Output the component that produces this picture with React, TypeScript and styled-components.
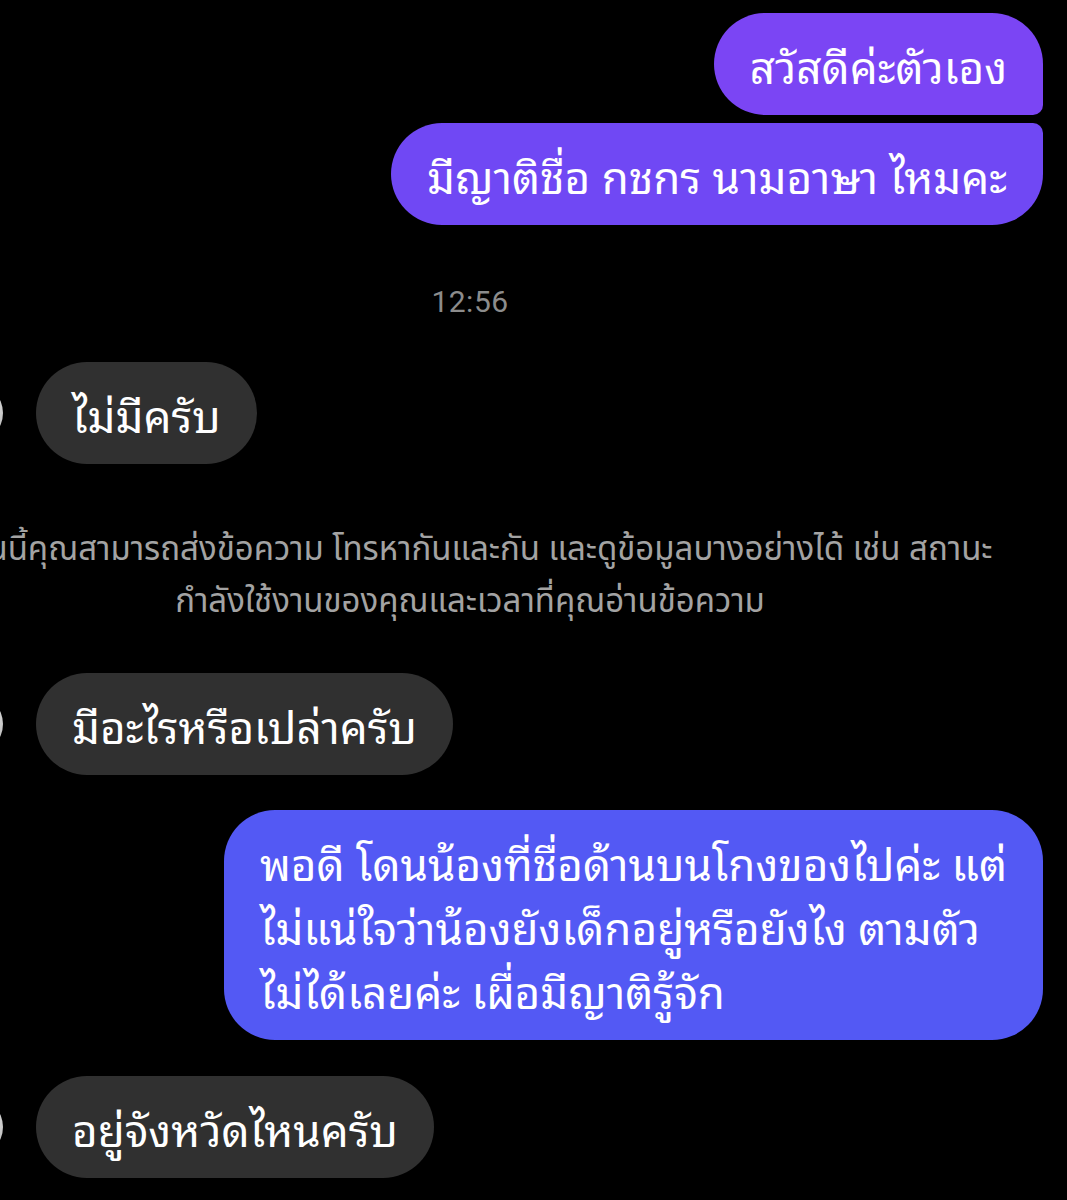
import React from "react";
import styled, { createGlobalStyle } from "styled-components";

const Global = createGlobalStyle`
  html, body { margin: 0; padding: 0; background: #000; }
  body { font-family: "Noto Sans Thai Looped", "Noto Sans Thai", "Noto Sans", "DejaVu Sans", sans-serif; }
`;

const Page = styled.div`
  width: 1067px;
  height: 1200px;
  background: #000;
  overflow: hidden;
  display: flex;
  flex-direction: column;
`;

const Row = styled.div<{ $side: "in" | "out"; $top: number }>`
  display: flex;
  align-items: center;
  justify-content: ${(p) => (p.$side === "out" ? "flex-end" : "flex-start")};
  margin-top: ${(p) => p.$top}px;
  padding: ${(p) => (p.$side === "out" ? "0 24px 0 0" : "0")};
  gap: 33px;
`;

const Avatar = styled.div`
  width: 60px;
  height: 60px;
  border-radius: 50%;
  margin-left: -57px;
  flex: none;
  background: radial-gradient(circle at 70% 40%, #e8e8e8, #8a8a8a);
`;

const Bubble = styled.div<{ $bg: string; $radius: string }>`
  background: ${(p) => p.$bg};
  border-radius: ${(p) => p.$radius};
  color: #fff;
  font-size: 44px;
  line-height: 64px;
  padding: 19px 36px;
  white-space: pre;
  flex: none;
  box-sizing: border-box;
`;

const Timestamp = styled.div`
  width: 940px;
  margin-top: 60px;
  text-align: center;
  font-family: Roboto, "Liberation Sans", sans-serif;
  font-size: 30px;
  line-height: 34px;
  color: #8c8c8c;
  letter-spacing: 0.5px;
`;

const SystemNote = styled.div`
  width: 940px;
  margin-top: 60px;
  display: flex;
  flex-direction: column;
  align-items: center;
  color: #a3a3a3;
  font-family: "Noto Sans Thai", "Noto Sans", sans-serif;
  font-size: 33px;
  line-height: 52px;
`;

const NoteLine = styled.span`
  white-space: nowrap;
`;

const R = 51;
const PURPLE1 = "#7b45f4";
const PURPLE2 = "#7048f4";
const BLUE = "#5359f4";
const GREY = "#303030";

export default function App() {
  return (
    <>
      <Global />
      <Page>
        <Row $side="out" $top={13}>
          <Bubble $bg={PURPLE1} $radius={`${R}px ${R}px 10px ${R}px`}>สวัสดีค่ะตัวเอง</Bubble>
        </Row>
        <Row $side="out" $top={8}>
          <Bubble $bg={PURPLE2} $radius={`${R}px 10px ${R}px ${R}px`}>มีญาติชื่อ กชกร นามอาษา ไหมคะ</Bubble>
        </Row>
        <Timestamp>12:56</Timestamp>
        <Row $side="in" $top={43}>
          <Avatar />
          <Bubble $bg={GREY} $radius={`${R}px`}>ไม่มีครับ</Bubble>
        </Row>
        <SystemNote>
          <NoteLine>ตอนนี้คุณสามารถส่งข้อความ โทรหากันและกัน และดูข้อมูลบางอย่างได้ เช่น สถานะ</NoteLine>
          <NoteLine>กำลังใช้งานของคุณและเวลาที่คุณอ่านข้อความ</NoteLine>
        </SystemNote>
        <Row $side="in" $top={45}>
          <Avatar />
          <Bubble $bg={GREY} $radius={`${R}px`}>มีอะไรหรือเปล่าครับ</Bubble>
        </Row>
        <Row $side="out" $top={35}>
          <Bubble $bg={BLUE} $radius={`${R}px`}>
            {"พอดี โดนน้องที่ชื่อด้านบนโกงของไปค่ะ แต่\nไม่แน่ใจว่าน้องยังเด็กอยู่หรือยังไง ตามตัว\nไม่ได้เลยค่ะ เผื่อมีญาติรู้จัก"}
          </Bubble>
        </Row>
        <Row $side="in" $top={36}>
          <Avatar />
          <Bubble $bg={GREY} $radius={`${R}px`}>อยู่จังหวัดไหนครับ</Bubble>
        </Row>
      </Page>
    </>
  );
}
